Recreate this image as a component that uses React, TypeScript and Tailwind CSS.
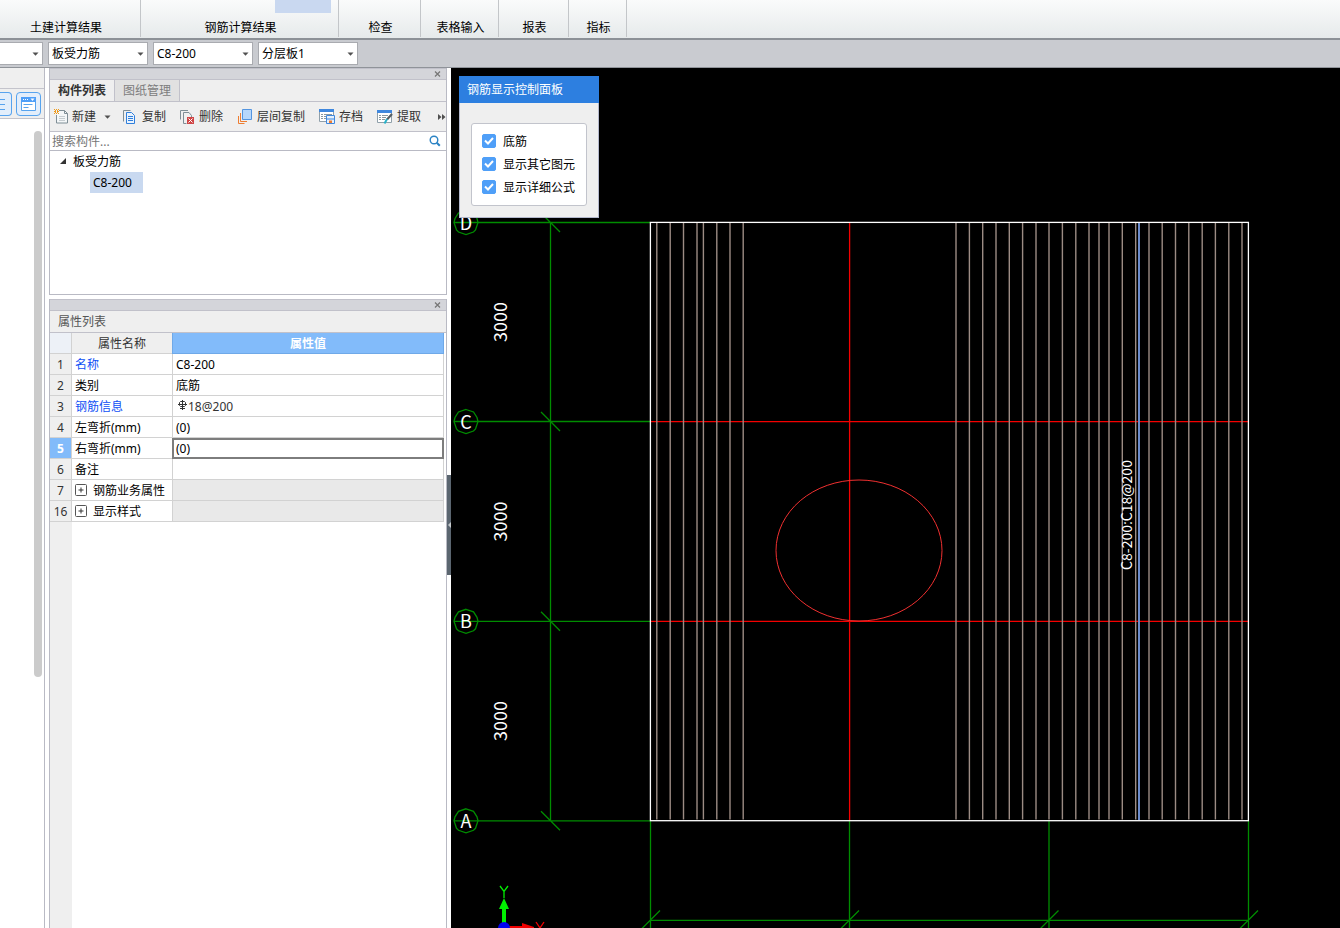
import type { ReactNode } from "react";

const ribbonGroups = [
  { label: "土建计算结果", width: "w-[141px] pr-2" },
  { label: "钢筋计算结果", width: "w-[198px] pl-0.5", active: true },
  { label: "检查", width: "w-[82px] pl-0.5" },
  { label: "表格输入", width: "w-[78px] pl-0.5" },
  { label: "报表", width: "w-[70px] pl-0.5" },
  { label: "指标", width: "w-[58px] pl-0.5" },
];

function Ribbon() {
  return (
    <header className="flex h-10 shrink-0 border-b-2 border-[#8c9197] bg-linear-to-b from-[#fafbfb] to-[#e6eaeb] pb-px">
      {ribbonGroups.map((g) => (
        <div
          key={g.label}
          className={`${g.width} relative flex shrink-0 items-end justify-center border-r border-[#c3c6c9]`}
        >
          {g.active && (
            <button
              aria-label="查看钢筋量"
              className="absolute top-0 right-[7px] h-[13px] w-14 bg-[#c9d8f0]"
            />
          )}
          <span className="leading-[18px]">{g.label}</span>
        </div>
      ))}
    </header>
  );
}

function Combo({ label, value, className, edge = "border" }: { label: string; value: string; className: string; edge?: string }) {
  return (
    <div className={`${className} grid h-[23px] shrink-0`}>
      <select
        aria-label={label}
        className={`${edge} col-start-1 row-start-1 w-full appearance-none border-[#a9abb0] bg-white pl-[3px] text-black outline-none`}
      >
        <option>{value}</option>
      </select>
      <svg
        className="pointer-events-none col-start-1 row-start-1 mr-1 self-center justify-self-end"
        width="7"
        height="4"
        viewBox="0 0 7 4"
      >
        <path d="M.5 .5h6L3.5 3.800z" fill="#505050" />
      </svg>
    </div>
  );
}

function SelectorBar() {
  return (
    <div className="flex h-7 shrink-0 items-center gap-[5px] border-b border-[#8f9399] bg-[#c9cbd0]">
      <Combo label="楼层" value="" className="w-[43px]" edge="border-y border-r" />
      <Combo label="构件类型" value="板受力筋" className="w-[100px]" />
      <Combo label="构件" value="C8-200" className="w-[100px]" />
      <Combo label="分层" value="分层板1" className="w-[100px]" />
    </div>
  );
}

function SideStrip() {
  return (
    <aside className="flex w-[45px] shrink-0 flex-col border-r border-[#b9bac4] bg-white">
      <div className="h-[21px] border-b border-[#c4c4cc] bg-[#efefef]" />
      <div className="flex h-[30px] items-center gap-1 border-b border-[#c4c4cc] bg-[#efefef]">
        <button aria-label="列表视图" className="flex h-6 w-3 items-center rounded-r border border-l-0 border-[#57a3ee] bg-[#e3eefb]">
          <svg width="8" height="14" viewBox="0 0 8 14">
            <path d="M0 2.500h5M0 7.500h5M0 12.500h5" stroke="#57a3ee" />
          </svg>
        </button>
        <button aria-label="面板视图" className="flex h-6 w-[25px] items-center justify-center rounded border border-[#57a3ee] bg-[#e3eefb]">
          <svg width="15" height="14" viewBox="0 0 15 14">
            <path d="M.5.5h14v13H.5z" fill="#fff" stroke="#57a3ee" />
            <path d="M0 0h15v5H0z" fill="#4f9ff8" />
            <path d="M2 2.500h1m1 0h1m1 0h1" stroke="#fff" />
            <path d="M9.500 1.500h4l-2 2.500z" fill="#fff" />
            <path d="M2.500 7.500h9M2.500 10.500h5" stroke="#57a3ee" />
          </svg>
        </button>
      </div>
      <div className="flex grow justify-end pt-3 pr-0.5">
        <div className="h-[546px] w-2 rounded-full bg-[#cbcbcb]" />
      </div>
    </aside>
  );
}

function PanelGrip() {
  return (
    <div className="flex h-3 shrink-0 items-center justify-end border-t border-b border-[#c1c1ca] bg-[#d4d5da] pr-[5px]">
      <button aria-label="关闭" className="flex">
        <svg width="7" height="6" viewBox="0 0 7 6">
          <path d="M1 .5l5 5M6 .5l-5 5" stroke="#777" strokeWidth="1.3" />
        </svg>
      </button>
    </div>
  );
}

function NewIcon() {
  return (
    <svg width="15" height="15" viewBox="0 0 15 15">
      <path d="M5 1.500h5.500l3 3v9.500H2.500V6" fill="#f4f7f8" stroke="#7f8e96" />
      <path d="M10.500 1.500v3h3" fill="none" stroke="#7f8e96" />
      <path d="M5 7.500h6M5 9.500h6M5 11.500h6" stroke="#c5ccd0" />
      <path d="M0 0h1v1H0zM2 0h1v1H2zM4 0h1v1H4zM1 1h1v1H1zM3 1h1v1H3zM0 2h2v1H0zM3 2h2v1H3zM1 3h1v1H1zM3 3h1v1H3zM0 4h1v1H0zM2 4h1v1H2zM4 4h1v1H4z" fill="#ef9a1a" />
    </svg>
  );
}

function CopyIcon() {
  return (
    <svg width="13" height="14" viewBox="0 0 13 14">
      <path d="M.5 11.500V.5h7" fill="none" stroke="#7f8e96" />
      <path d="M3.500 2.500h5l3 3v8h-8z" fill="#eaf3fd" stroke="#2f7fdc" />
      <path d="M5 6.500h5M5 8.500h5M5 10.500h5" stroke="#2f7fdc" />
    </svg>
  );
}

function DeleteIcon() {
  return (
    <svg width="15" height="14" viewBox="0 0 15 14">
      <path d="M.5 9.500V.5h7.500" fill="none" stroke="#7f8e96" />
      <path d="M6.500 13.500h-3v-11h5.500l2.500 3V7" fill="none" stroke="#7f8e96" />
      <path d="M7 7h7v7H7z" fill="#cf4646" />
      <path d="M8.500 8.500l4 4M12.500 8.500l-4 4" stroke="#fff" />
    </svg>
  );
}

function LayerCopyIcon() {
  return (
    <svg width="15" height="15" viewBox="0 0 15 15">
      <path d="M4.500.5h9v10h-9z" fill="#b7d7fb" stroke="#5495e0" />
      <path d="M2.500 4v8.500H9M.5 7v7.500h6" fill="none" stroke="#ee7d31" />
    </svg>
  );
}

function ArchiveIcon() {
  return (
    <svg width="16" height="15" viewBox="0 0 16 15">
      <path d="M.5.5h14v12H.5z" fill="#fff" stroke="#90a0aa" />
      <path d="M0 0h15v3H0z" fill="#3f87de" />
      <path d="M2 5.500h2m1 0h8M2 7.500h2m1 0h2M2 9.500h2m1 0h2" stroke="#8a979f" />
      <path d="M7.500 6.500h8v8h-8z" fill="#e5f0fc" stroke="#3f87de" />
      <path d="M8 10h7" stroke="#3f87de" />
      <path d="M10 11.500h3V14h-3z" fill="#ee7d31" />
    </svg>
  );
}

function ExtractIcon() {
  return (
    <svg width="16" height="14" viewBox="0 0 16 14">
      <path d="M.5.5h14v12H.5z" fill="#fff" stroke="#90a0aa" />
      <path d="M0 0h15v3H0z" fill="#3f87de" />
      <path d="M2 5.500h2m1 0h6M2 7.500h2m1 0h4M2 9.500h2m1 0h3" stroke="#8a979f" />
      <path d="M15 4l-5 5.500" stroke="#555d63" strokeWidth="2.200" />
      <path d="M10 9l-2.500 4.500" stroke="#28b1c8" strokeWidth="2" />
    </svg>
  );
}

function Tool({ icon, children, className }: { icon: ReactNode; children: ReactNode; className: string }) {
  return (
    <button className={`${className} flex shrink-0 items-center justify-between`}>
      {icon}
      <span>{children}</span>
    </button>
  );
}

function ComponentPanel() {
  return (
    <section className="flex h-[227px] shrink-0 flex-col border-r border-b border-l border-[#b9bac4] bg-white">
      <PanelGrip />
      <div role="tablist" className="flex h-[22px] shrink-0 border-b border-[#c1c1ca] bg-[#efefef]">
        <button role="tab" aria-selected="true" className="w-16 font-bold text-[#333]">
          构件列表
        </button>
        <button role="tab" aria-selected="false" className="w-[66px] border-x border-[#c1c1ca] bg-[#e1e1e1] text-[#7d7d7d]">
          图纸管理
        </button>
      </div>
      <div className="flex h-[30px] shrink-0 items-center border-b border-[#c1c1ca] bg-[#efefef] pl-1 text-[#333]">
        <Tool icon={<NewIcon />} className="w-[42px]">新建</Tool>
        <svg className="ml-2 shrink-0" width="7" height="4" viewBox="0 0 7 4">
          <path d="M.5 .5h6L3.500 3.800z" fill="#505050" />
        </svg>
        <Tool icon={<CopyIcon />} className="ml-3 w-[43px]">复制</Tool>
        <Tool icon={<DeleteIcon />} className="ml-[14px] w-[43px]">删除</Tool>
        <Tool icon={<LayerCopyIcon />} className="ml-[15px] w-[67px]">层间复制</Tool>
        <Tool icon={<ArchiveIcon />} className="ml-[14px] w-11">存档</Tool>
        <Tool icon={<ExtractIcon />} className="ml-[14px] w-11">提取</Tool>
        <button aria-label="更多" className="ml-auto">
          <svg width="8" height="6" viewBox="0 0 8 6">
            <path d="M0 0l3.500 3L0 6zM4 0l3.500 3L4 6z" fill="#505050" />
          </svg>
        </button>
      </div>
      <div className="flex h-[19px] shrink-0 items-center border-b border-[#b9bac4] pr-[5px]">
        <input
          aria-label="搜索构件"
          placeholder="搜索构件..."
          className="h-full min-w-0 grow pl-0.5 outline-none placeholder:text-[#767676]"
        />
        <svg width="12" height="12" viewBox="0 0 12 12">
          <circle cx="5" cy="5" r="3.800" fill="none" stroke="#2b83c4" strokeWidth="1.400" />
          <path d="M7.800 7.800l3 3" stroke="#2b83c4" strokeWidth="2" />
        </svg>
      </div>
      <ul role="tree" className="text-black">
        <li role="treeitem" aria-expanded="true" className="leading-[21px]">
          <div className="flex items-center gap-[6px] pl-[10px]">
            <svg width="7" height="7" viewBox="0 0 7 7">
              <path d="M6 0v6H0z" fill="#333" />
            </svg>
            板受力筋
          </div>
          <ul role="group" className="pl-10">
            <li role="treeitem" aria-selected="true" className="w-[53px] bg-[#c9d9f0] pl-[3px]">
              C8-200
            </li>
          </ul>
        </li>
      </ul>
    </section>
  );
}

function RebarValue() {
  return (
    <span className="flex items-start gap-px pl-0.5 text-[#333]">
      <svg className="mt-0.5" width="9" height="10" viewBox="0 0 9 10">
        <path d="M2.500 1.500h4l1 1v3l-1 1h-4l-1-1v-3z" fill="none" stroke="#333" />
        <path d="M4.500 0v10M0 4.500h9M2 8.500h5" stroke="#333" />
      </svg>
      18@200
    </span>
  );
}

type Row = { no: number; name: string; value?: ReactNode; link?: boolean; group?: boolean; active?: boolean };

const rows: Row[] = [
  { no: 1, name: "名称", value: "C8-200", link: true },
  { no: 2, name: "类别", value: "底筋" },
  { no: 3, name: "钢筋信息", value: <RebarValue />, link: true },
  { no: 4, name: "左弯折(mm)", value: "(0)" },
  { no: 5, name: "右弯折(mm)", value: "(0)", active: true },
  { no: 6, name: "备注" },
  { no: 7, name: "钢筋业务属性", group: true },
  { no: 16, name: "显示样式", group: true },
];

function PropertyRow({ row }: { row: Row }) {
  return (
    <tr className="h-[21px]">
      <th
        scope="row"
        className={`border-r border-b border-[#d2d2d2] p-0 pt-0.5 ${
          row.active ? "bg-[#82bbfa] font-bold text-white" : "bg-[#efefef] font-normal text-[#333]"
        }`}
      >
        {row.no}
      </th>
      <td className={`border-b border-[#d2d2d2] bg-white p-0 pt-0.5 pl-[3px] whitespace-nowrap ${row.link ? "text-[#0f50f5]" : ""}`}>
        {row.group ? (
          <span className="flex items-start gap-[6px]">
            <button aria-label={`展开${row.name}`} className="mt-0.5 flex">
              <svg width="12" height="12" viewBox="0 0 12 12">
                <rect x=".5" y=".5" width="11" height="11" rx="1" fill="#fff" stroke="#555" />
                <path d="M3.500 6h5M6 3.500v5" stroke="#333" />
              </svg>
            </button>
            {row.name}
          </span>
        ) : (
          row.name
        )}
      </td>
      <td
        className={`border-x border-b border-[#d2d2d2] p-0 pt-0.5 pl-[3px] ${row.group ? "bg-[#e9e9e9]" : "bg-white"} ${
          row.active ? "outline-2 -outline-offset-2 outline-[#7d7d7d]" : ""
        }`}
      >
        {row.value}
      </td>
    </tr>
  );
}

function PropertyPanel() {
  return (
    <section className="flex grow flex-col border-x border-[#b9bac4] bg-white">
      <PanelGrip />
      <h2 className="h-[22px] shrink-0 border-b border-[#c1c1ca] bg-[#efefef] pl-2 leading-[22px] text-[#555]">属性列表</h2>
      <div className="pr-0.5">
        <table className="w-full table-fixed border-separate border-spacing-0 leading-[18px] text-black">
          <colgroup>
            <col className="w-[22px]" />
            <col className="w-[100px]" />
            <col />
          </colgroup>
          <thead>
            <tr className="h-[21px] text-[#333]">
              <th aria-label="序号" className="border-r border-b border-[#d2d2d2] bg-[#edf1f7] p-0" />
              <th className="border-b border-[#d2d2d2] bg-[#efefef] p-0 pt-0.5 font-normal">属性名称</th>
              <th className="border-x border-b border-[#6fa9e8] bg-[#82bbfa] p-0 pt-0.5 font-bold text-white">属性值</th>
            </tr>
          </thead>
          <tbody>
            {rows.map((r) => (
              <PropertyRow key={r.no} row={r} />
            ))}
          </tbody>
        </table>
      </div>
      <div className="w-[22px] grow bg-[#efefef]" />
    </section>
  );
}

const bars = [
  656.8, 670.2, 683.5, 697, 703.4, 716.8, 730, 743.2, 956, 969.4, 982.7, 996, 1009.3, 1022.6, 1036, 1049, 1062.4,
  1075.8, 1089, 1099, 1109, 1122.3, 1135.7, 1149, 1162.2, 1175.5, 1188.8, 1202.2, 1215.4, 1228.8, 1242,
];

const axisRows = [
  { name: "D", y: 222.5 },
  { name: "C", y: 421.5 },
  { name: "B", y: 621.3 },
  { name: "A", y: 820.8 },
];

const axisColumns = [650.5, 849.5, 1049, 1248.5];

function Drawing() {
  return (
    <svg className="block h-full w-full" role="img" aria-label="板受力筋平面图">
      <g transform="translate(-451 -68)" fontFamily='"Noto Sans CJK SC", sans-serif'>
        <g stroke="#008c00" strokeWidth="1.300" fill="none">
          {axisRows.map((a) => (
            <g key={a.name}>
              <path d={`M454 ${a.y}H650M541 ${a.y - 9.5}l19 19`} />
              <path
                transform={`translate(466 ${a.y})`}
                d="M0-12L7.500-9.500L11-4L12 0L9.500 7.500L7.500 9.500L0 12L-7.500 9.500L-9.500 7.500L-12 0L-11-4L-7.500-9.500Z"
              />
            </g>
          ))}
          <path d="M550.500 222V821M650 920.300H1249" />
          {axisColumns.map((x) => (
            <path key={x} d={`M${x} 821V940M${x - 9.5} 929.500l19-19`} />
          ))}
        </g>
        <g fill="#fff" fontSize="18" textAnchor="middle">
          {axisRows.map((a) => (
            <text key={a.name} x="466" y={a.y + 7}>
              {a.name}
            </text>
          ))}
          {[322, 521.5, 721].map((y) => (
            <text key={y} transform={`translate(507 ${y}) rotate(-90)`}>
              3000
            </text>
          ))}
        </g>
        <path d="M849.600 223V821M650 421.600H1248M650 621.300H1248" stroke="#f40000" strokeWidth="1.300" />
        <ellipse cx="859" cy="550.500" rx="83" ry="70.500" fill="none" stroke="#f03030" />
        <g stroke="#9c8c84" strokeWidth="1.400">
          {bars.map((x) => (
            <path key={x} d={`M${x} 223V819.500`} />
          ))}
        </g>
        <path d="M1139 223V820" stroke="#6c8ccc" strokeWidth="2" />
        <rect x="650.400" y="222.400" width="598" height="598.300" fill="none" stroke="#fff" strokeWidth="1.300" />
        <text transform="translate(1132 515) rotate(-90)" fontSize="14" textAnchor="middle" fill="#fff">
          C8-200:C18@200
        </text>
        <path d="M502 923V909h-3l5-11 5 11h-3v14z" fill="#00f000" />
        <path d="M508 926h14v-3l12 4v2l-12 4v-2h-14z" fill="#f00000" />
        <circle cx="504" cy="928" r="6" fill="#0000f0" />
        <path d="M500 886l4 5.500 4-5.500M504 891.500V898" fill="none" stroke="#00f000" strokeWidth="1.300" />
        <path d="M536 922l8 12M544 922l-8 12" fill="none" stroke="#f00000" strokeWidth="1.300" />
      </g>
    </svg>
  );
}

function CheckRow({ children }: { children: ReactNode }) {
  return (
    <label className="flex h-[23px] items-start gap-[7px]">
      <span className="mt-1 grid">
        <input
          type="checkbox"
          defaultChecked
          className="peer col-start-1 row-start-1 size-[14px] appearance-none rounded-xs border border-[#4f9ff8] bg-white checked:bg-[#4f9ff8]"
        />
        <svg
          className="pointer-events-none invisible col-start-1 row-start-1 place-self-center peer-checked:visible"
          width="10"
          height="8"
          viewBox="0 0 10 8"
        >
          <path d="M1 3.500L4 6.500L9 1" fill="none" stroke="#fff" strokeWidth="2" />
        </svg>
      </span>
      <span className="leading-[23px]">{children}</span>
    </label>
  );
}

function DisplayPanel() {
  return (
    <div className="absolute top-2 left-2 w-[140px] bg-[#efefef] text-black">
      <h2 className="h-[27px] bg-[#2d7fe0] pl-2 leading-[27px] text-white">钢筋显示控制面板</h2>
      <div className="border border-t-0 border-[#b3b8cc] px-[11px] pt-5 pb-[11px]">
        <div className="rounded-[3px] border border-[#c2c4cc] bg-white py-[6px] pl-[10px]">
          <CheckRow>底筋</CheckRow>
          <CheckRow>显示其它图元</CheckRow>
          <CheckRow>显示详细公式</CheckRow>
        </div>
      </div>
    </div>
  );
}

export default function App() {
  return (
    <div className='flex h-screen flex-col overflow-hidden bg-white font-["Noto_Sans","Noto_Sans_CJK_SC",sans-serif] text-[12px] leading-[18px] text-black'>
      <Ribbon />
      <SelectorBar />
      <div className="flex min-h-0 grow">
        <SideStrip />
        <div className="ml-1 flex w-[398px] shrink-0 flex-col gap-1">
          <ComponentPanel />
          <PropertyPanel />
        </div>
        <div className="w-1 shrink-0 pt-[407px]">
          <button aria-label="折叠面板" className="flex h-[100px] w-full items-center bg-[#5b6670]">
            <svg width="4" height="6" viewBox="0 0 4 6">
              <path d="M4 0v6L1 3z" fill="#c5cacd" />
            </svg>
          </button>
        </div>
        <main className="relative min-w-0 grow bg-black">
          <Drawing />
          <DisplayPanel />
        </main>
      </div>
    </div>
  );
}
